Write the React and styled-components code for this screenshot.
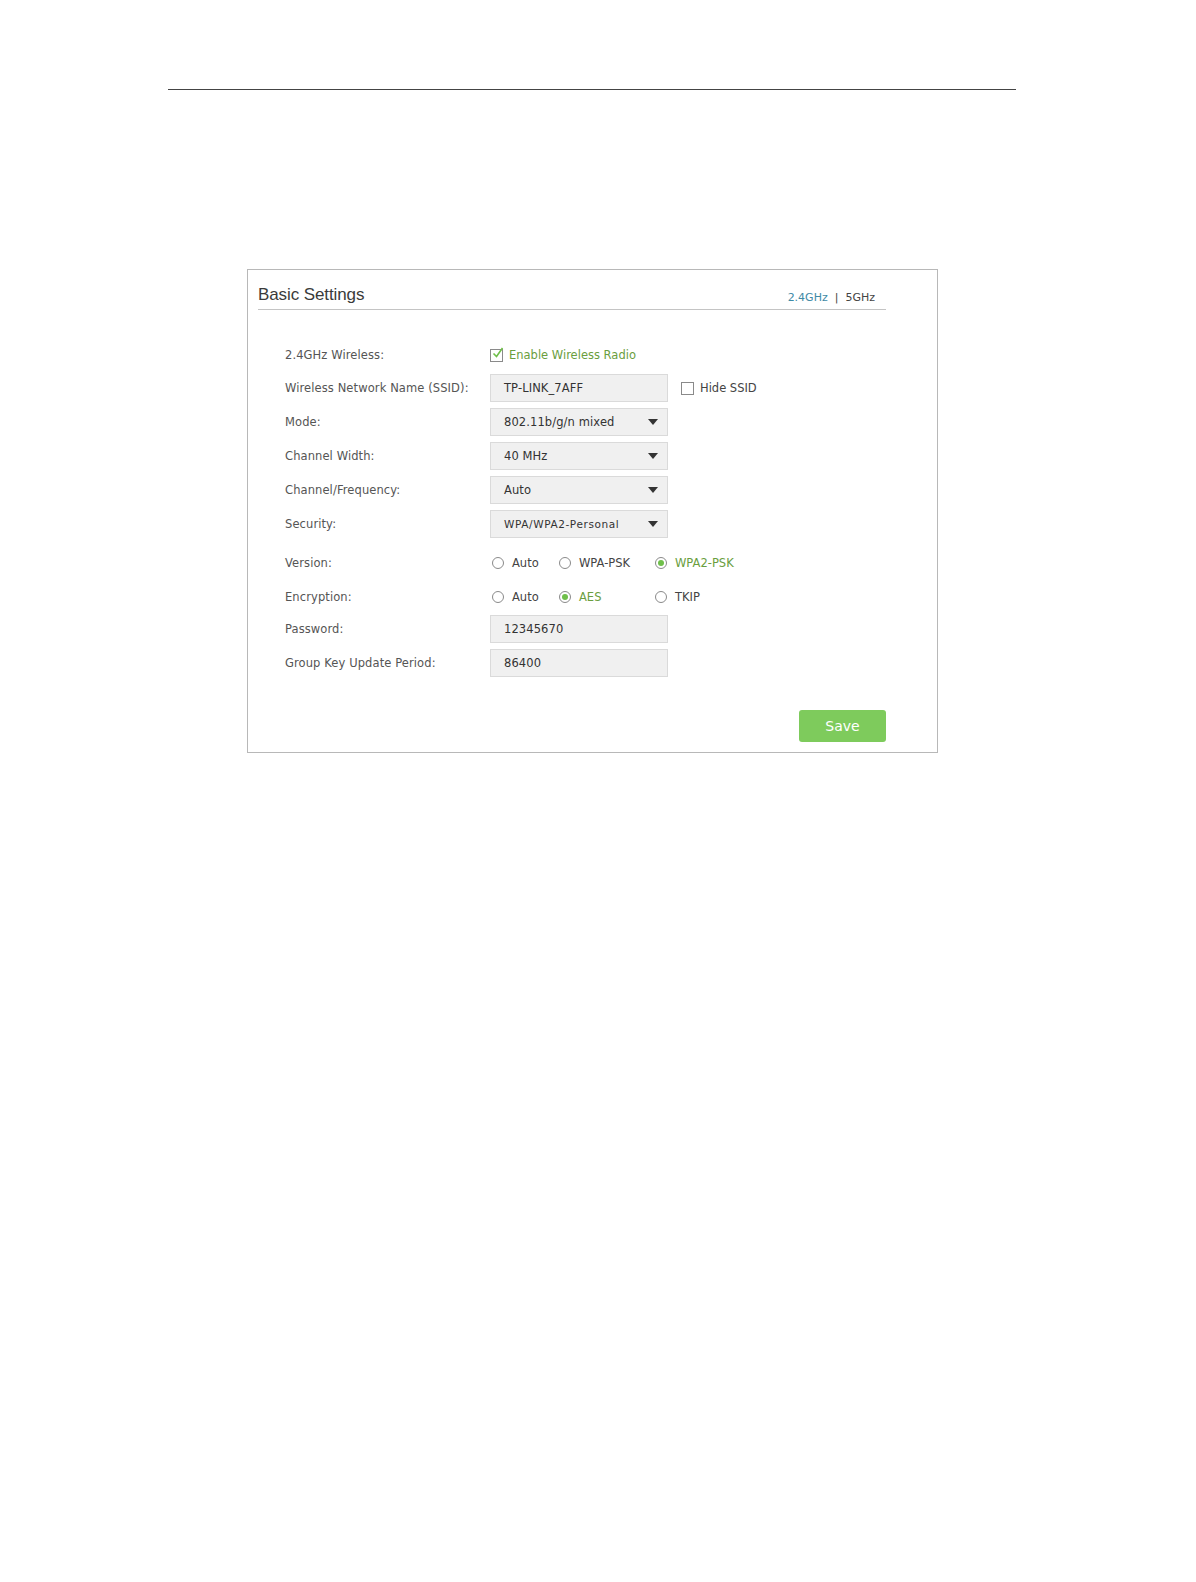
import React from 'react';
import styled, { createGlobalStyle } from 'styled-components';

const GlobalStyle = createGlobalStyle`
  html, body {
    margin: 0;
    padding: 0;
    background: #fff;
    overflow: hidden;
  }
  body {
    font-family: "DejaVu Sans", "Liberation Sans", sans-serif;
    color: #444;
  }
`;

const Page = styled.div`
  padding-top: 89px;
`;

const TopRule = styled.hr`
  margin: 0 0 0 168px;
  width: 848px;
  border: none;
  border-top: 1.5px solid #444;
`;

const Panel = styled.section`
  margin: 179px 0 0 247px;
  width: 691px;
  box-sizing: border-box;
  border: 1px solid #b8b8b8;
  padding: 11px 51px 10px 10px;
`;

const Header = styled.div`
  display: flex;
  justify-content: space-between;
  align-items: center;
  height: 28px;
  border-bottom: 1px solid #c4c4c4;
`;

const Title = styled.h2`
  margin: 0;
  font-family: "Liberation Sans", sans-serif;
  font-weight: normal;
  font-size: 17px;
  color: #3a3a3a;
  letter-spacing: -0.1px;
`;

const Tabs = styled.div`
  display: flex;
  align-items: center;
  gap: 7px;
  font-size: 11px;
  padding-right: 11px;
  padding-top: 4px;
  color: #444;
`;

const Tab = styled.span`
  color: ${({ active }) => (active ? '#3f8aa6' : '#444')};
`;

const Form = styled.div`
  display: flex;
  flex-direction: column;
  padding: 31px 0 0 27px;
`;

const Row = styled.div`
  display: grid;
  grid-template-columns: 205px auto;
  align-items: center;
  height: 28px;
  margin-top: ${({ gap }) => gap}px;
  font-size: 11.5px;
`;

const Label = styled.span`
  color: #555;
  letter-spacing: 0.1px;
`;

const Field = styled.div`
  display: flex;
  align-items: center;
`;

const Box = styled.div`
  width: 178px;
  height: 28px;
  box-sizing: border-box;
  background: #f0f0f0;
  border: 1px solid #dadada;
  display: flex;
  align-items: center;
  justify-content: space-between;
  padding: 0 9px 0 13px;
  color: #333;
  font-size: ${({ small }) => (small ? '10.5px' : '11.5px')};
  letter-spacing: ${({ small }) => (small ? '0.6px' : '0.1px')};
`;

const Caret = styled.span`
  width: 0;
  height: 0;
  border-left: 5px solid transparent;
  border-right: 5px solid transparent;
  border-top: 6px solid #333;
`;

const Check = styled.span`
  display: inline-flex;
  align-items: center;
  gap: 6px;
  color: ${({ on }) => (on ? '#6a9e3e' : '#444')};
  margin-left: ${({ offset }) => offset || 0}px;
`;

const CheckBox = styled.span`
  width: 11px;
  height: 11px;
  border: 1px solid #8a8a8a;
  background: #fff;
  position: relative;
  display: inline-block;
`;

const Tick = styled.svg`
  position: absolute;
  left: 1px;
  top: -3px;
`;

const Radios = styled.div`
  display: grid;
  grid-template-columns: 67px 96px auto;
  align-items: center;
`;

const Radio = styled.span`
  display: inline-flex;
  align-items: center;
  gap: 8px;
  color: ${({ on }) => (on ? '#6a9e3e' : '#444')};
  padding-left: 2px;
`;

const Dot = styled.span`
  width: 10px;
  height: 10px;
  border-radius: 50%;
  border: 1px solid #8a8a8a;
  background: #fff;
  display: inline-flex;
  align-items: center;
  justify-content: center;

  &::after {
    content: '';
    width: 6px;
    height: 6px;
    border-radius: 50%;
    background: ${({ on }) => (on ? '#6fbf4a' : 'transparent')};
  }
`;

const Footer = styled.div`
  display: flex;
  justify-content: flex-end;
  margin-top: 33px;
`;

const SaveButton = styled.button`
  width: 87px;
  height: 32px;
  border: none;
  border-radius: 3px;
  background: #7ecb5c;
  color: #fff;
  font-family: "DejaVu Sans", sans-serif;
  font-size: 14px;
  cursor: pointer;
`;

const selects = [
  { label: 'Mode:', value: '802.11b/g/n mixed' },
  { label: 'Channel Width:', value: '40 MHz' },
  { label: 'Channel/Frequency:', value: 'Auto' },
  { label: 'Security:', value: 'WPA/WPA2-Personal', small: true },
];

const RadioGroup = ({ options, selected }) => (
  <Radios>
    {options.map(o => (
      <Radio key={o} on={o === selected ? 1 : 0}>
        <Dot on={o === selected ? 1 : 0} />
        {o}
      </Radio>
    ))}
  </Radios>
);

const App = () => (
  <Page>
    <GlobalStyle />
    <TopRule />
    <Panel>
      <Header>
        <Title>Basic Settings</Title>
        <Tabs>
          <Tab active>2.4GHz</Tab>
          <span>|</span>
          <Tab>5GHz</Tab>
        </Tabs>
      </Header>
      <Form>
        <Row gap={0}>
          <Label>2.4GHz Wireless:</Label>
          <Field>
            <Check on={1}>
              <CheckBox>
                <Tick width="12" height="12" viewBox="0 0 12 12">
                  <path d="M1.5 6.5 L4.5 9.5 L10.5 1" fill="none" stroke="#6fbf4a" strokeWidth="1.6" />
                </Tick>
              </CheckBox>
              Enable Wireless Radio
            </Check>
          </Field>
        </Row>
        <Row gap={5}>
          <Label>Wireless Network Name (SSID):</Label>
          <Field>
            <Box>TP-LINK_7AFF</Box>
            <Check offset={13}>
              <CheckBox />
              Hide SSID
            </Check>
          </Field>
        </Row>
        {selects.map(s => (
          <Row gap={6} key={s.label}>
            <Label>{s.label}</Label>
            <Box small={s.small}>
              {s.value}
              <Caret />
            </Box>
          </Row>
        ))}
        <Row gap={11}>
          <Label>Version:</Label>
          <RadioGroup options={['Auto', 'WPA-PSK', 'WPA2-PSK']} selected="WPA2-PSK" />
        </Row>
        <Row gap={6}>
          <Label>Encryption:</Label>
          <RadioGroup options={['Auto', 'AES', 'TKIP']} selected="AES" />
        </Row>
        <Row gap={4}>
          <Label>Password:</Label>
          <Box>12345670</Box>
        </Row>
        <Row gap={6}>
          <Label>Group Key Update Period:</Label>
          <Box>86400</Box>
        </Row>
      </Form>
      <Footer>
        <SaveButton>Save</SaveButton>
      </Footer>
    </Panel>
  </Page>
);

export default App;
